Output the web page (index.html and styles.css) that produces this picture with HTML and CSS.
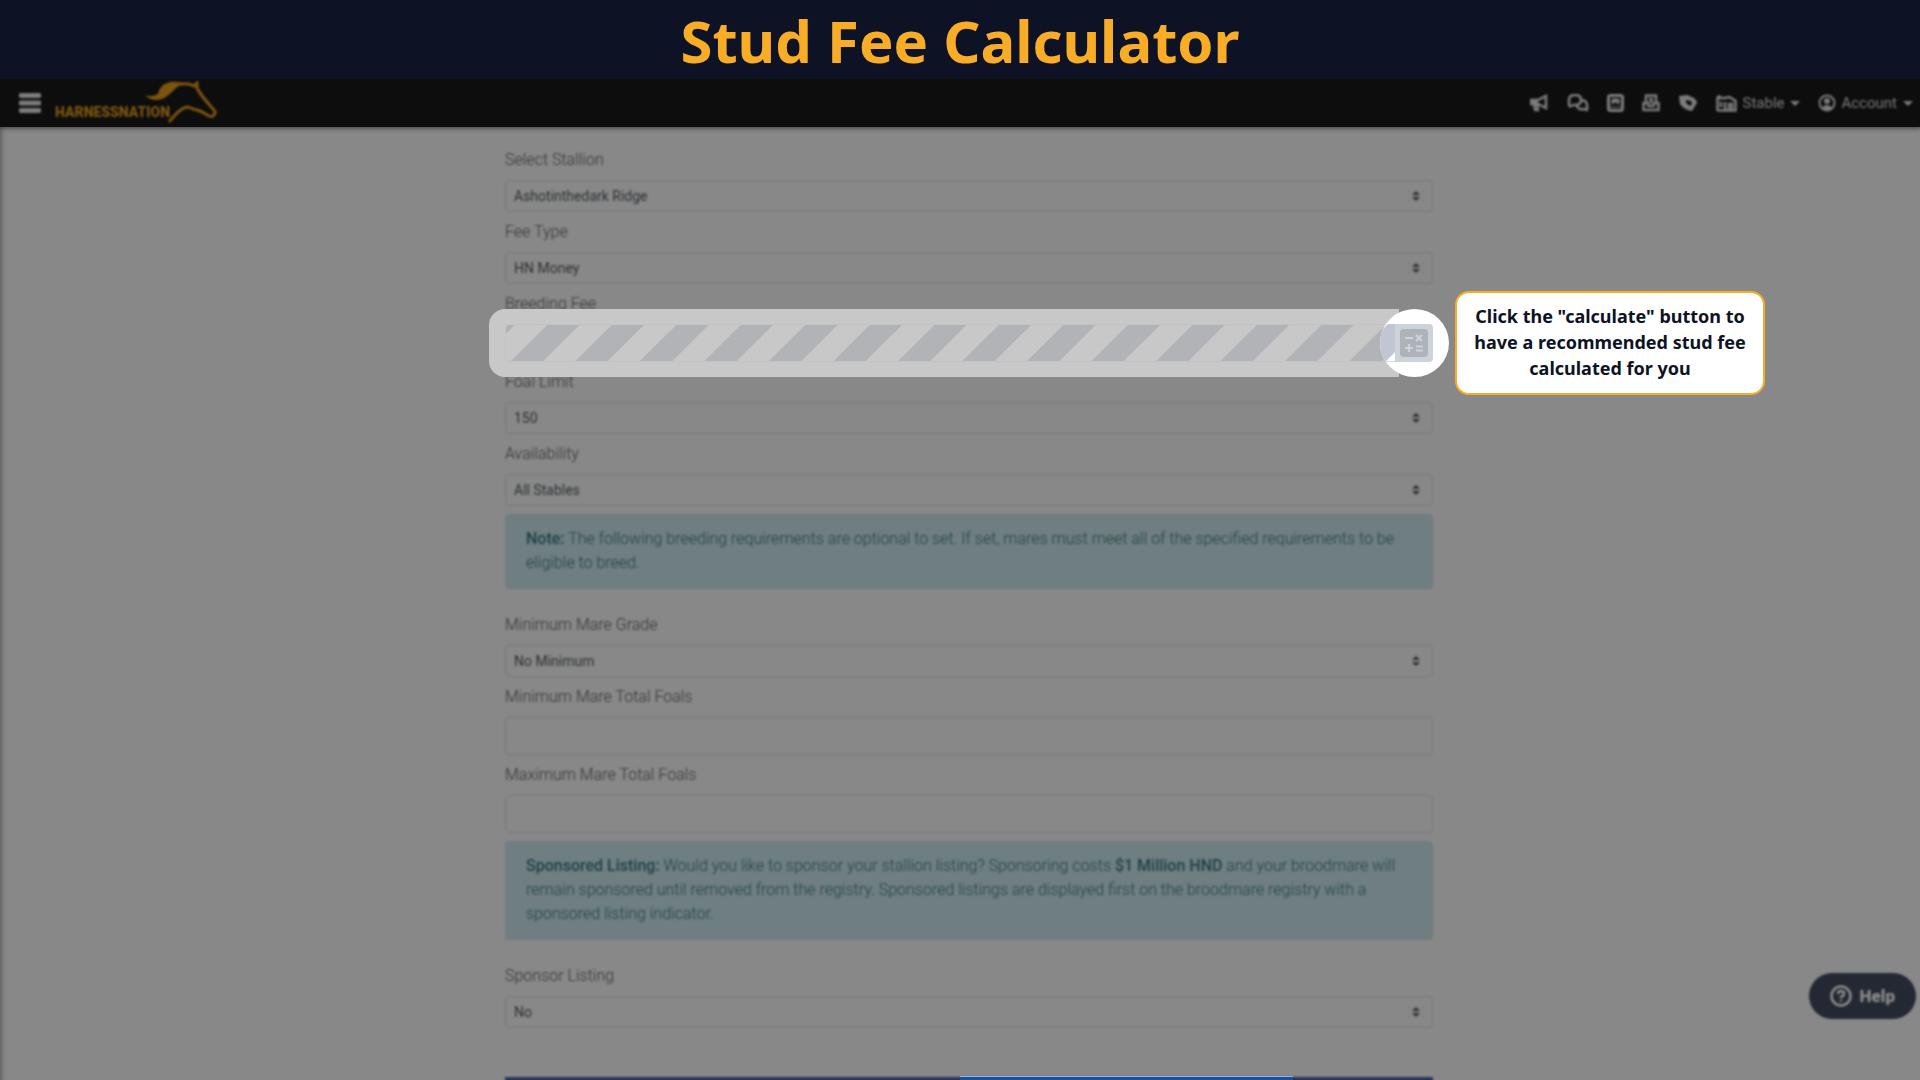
FILE: index.html
```html
<!DOCTYPE html>
<html lang="en">
<head>
<meta charset="utf-8">
<title>Stud Fee Calculator</title>
<link rel="stylesheet" href="styles.css">
</head>
<body>
<div class="shell">
  <header class="banner"><h1>Stud Fee Calculator</h1></header>

  <div class="stage">
    <nav class="navbar">
      <div class="nav-content">
        <button class="menu" type="button" aria-label="Menu">
          <svg width="22" height="21" viewBox="0 0 22 21"><path d="M2 2.5h18M2 10h18M2 17.500h18" stroke="currentColor" stroke-width="5" stroke-linecap="round"/></svg>
        </button>
        <a class="brand" href="#">
          <span>HARNESSNATION</span>
          <svg class="horse" width="74" height="44" viewBox="0 0 74 44" aria-hidden="true">
            <path d="M1 14c4 2 9 1 13-1 1-5 4-10 12-12 7-1 12 1 17 1-6 1-9 3-12 6-4 4-8 8-13 10-6 2-13 1-17-4z" fill="currentColor"/>
            <path d="M31 5c6-3 14-3 19 0l3-3v5c4 8 11 15 17 22 3 3-1 8-5 6-4-2-7-5-12-6-4 0-6-3-10-3-7 1-12 8-18 15" fill="none" stroke="currentColor" stroke-width="3"/>
          </svg>
        </a>
        <ul class="links">
          <li><a href="#" aria-label="News"><svg width="19" height="18" viewBox="0 0 19 18"><path d="M1 6h7l8-4v12l-8-4H1zM4 10l1 6h3l-1-6M16 1v14" fill="none" stroke="currentColor" stroke-width="2.500"/><path d="M2 6h6v4H2z" fill="currentColor"/></svg></a></li>
          <li><a href="#" aria-label="Messages"><svg width="22" height="18" viewBox="0 0 22 18"><path d="M2 12V6q0-5 6-5t6 5-6 5H6l-4 2M15 6q5 1 5 5v5l-3-1q-6 1-7-3" fill="none" stroke="currentColor" stroke-width="2.500" stroke-linejoin="round"/></svg></a></li>
          <li><a href="#" aria-label="Auctions"><svg width="17" height="18" viewBox="0 0 17 18"><rect x="1.500" y="1.500" width="14" height="15" rx="2" fill="none" stroke="currentColor" stroke-width="3"/><path d="M5 5h7v5l-3.500-2L5 10zM2 13h13" fill="currentColor" stroke="currentColor"/></svg></a></li>
          <li><a href="#" aria-label="Registry"><svg width="18" height="18" viewBox="0 0 18 18"><path d="M4 9V1.500h10V9M1.500 9h4l1 3h5l1-3h4v7h-15zM7 5h4M7 8h4" fill="none" stroke="currentColor" stroke-width="2.500"/></svg></a></li>
          <li><a href="#" aria-label="Sales"><svg width="20" height="18" viewBox="0 0 20 18"><path d="M1 2l8-1q10 3 10 8l-5 8q-8-1-12-7z" fill="currentColor"/><path d="M8 6l5 1 1 3-2 2-4-3z" fill="#0d0d0d"/></svg></a></li>
          <li><a href="#"><svg width="21" height="18" viewBox="0 0 21 18"><path d="M1.500 17V4h8l4-1 6 4v9.500h-18M3 4V1M9 8v8M13 16v-6h3v6M5 8v5" fill="none" stroke="currentColor" stroke-width="2.500"/></svg><span>Stable</span><i class="caret"></i></a></li>
          <li><a href="#"><svg width="18" height="18" viewBox="0 0 18 18"><circle cx="9" cy="9" r="7.500" fill="none" stroke="currentColor" stroke-width="2"/><circle cx="9" cy="7" r="3" fill="currentColor"/><path d="M3.500 14q5.500-6 11 0-5.500 4-11 0z" fill="currentColor"/></svg><span>Account</span><i class="caret"></i></a></li>
        </ul>
      </div>
    </nav>

    <main class="page">
      <form class="form">
        <div class="field soft">
          <label for="stallion">Select Stallion</label>
          <div class="pick"><select id="stallion"><option>Ashotinthedark Ridge</option></select><svg width="8" height="10" viewBox="0 0 8 10"><path d="M4 0l4 4H0zM4 10L0 6h8z"/></svg></div>
        </div>
        <div class="field soft">
          <label for="feetype">Fee Type</label>
          <div class="pick"><select id="feetype"><option>HN Money</option></select><svg width="8" height="10" viewBox="0 0 8 10"><path d="M4 0l4 4H0zM4 10L0 6h8z"/></svg></div>
        </div>
        <div class="field fee">
          <label class="soft" for="fee">Breeding Fee</label>
          <div class="spotlight">
            <input class="striped" id="fee" type="text" disabled>
            <div class="ring">
              <span class="ring-stripe"></span>
              <button class="calculate" type="button" aria-label="Calculate">
                <svg width="28" height="28" viewBox="0 0 28 28"><rect width="28" height="28" rx="4" fill="#aeb3ba"/><path d="M5 9h8M16 6l6 6M22 6l-6 6M5 19h8M9 15v8M16 17.500h7M16 21.500h7" stroke="#cdd3db" stroke-width="2.200"/></svg>
              </button>
            </div>
            <p class="tip" role="tooltip">Click the "calculate" button to have a recommended stud fee calculated for you</p>
          </div>
        </div>
        <div class="field soft">
          <label for="limit">Foal Limit</label>
          <div class="pick"><select id="limit"><option>150</option></select><svg width="8" height="10" viewBox="0 0 8 10"><path d="M4 0l4 4H0zM4 10L0 6h8z"/></svg></div>
        </div>
        <div class="field soft">
          <label for="avail">Availability</label>
          <div class="pick"><select id="avail"><option>All Stables</option></select><svg width="8" height="10" viewBox="0 0 8 10"><path d="M4 0l4 4H0zM4 10L0 6h8z"/></svg></div>
        </div>
        <p class="alert soft"><strong>Note:</strong> The following breeding requirements are optional to set. If set, mares must meet all of the specified requirements to be eligible to breed.</p>
        <div class="field soft">
          <label for="grade">Minimum Mare Grade</label>
          <div class="pick"><select id="grade"><option>No Minimum</option></select><svg width="8" height="10" viewBox="0 0 8 10"><path d="M4 0l4 4H0zM4 10L0 6h8z"/></svg></div>
        </div>
        <div class="field soft">
          <label for="minfoals">Minimum Mare Total Foals</label>
          <input id="minfoals" type="text">
        </div>
        <div class="field soft">
          <label for="maxfoals">Maximum Mare Total Foals</label>
          <input id="maxfoals" type="text">
        </div>
        <p class="alert soft"><strong>Sponsored Listing:</strong> Would you like to sponsor your stallion listing? Sponsoring costs <strong>$1 Million HND</strong> and your broodmare will remain sponsored until removed from the registry. Sponsored listings are displayed first on the broodmare registry with a sponsored listing indicator.</p>
        <div class="field soft">
          <label for="sponsor">Sponsor Listing</label>
          <div class="pick"><select id="sponsor"><option>No</option></select><svg width="8" height="10" viewBox="0 0 8 10"><path d="M4 0l4 4H0zM4 10L0 6h8z"/></svg></div>
        </div>
        <button class="submit soft" type="submit" aria-label="Submit"></button>
      </form>
    </main>
  </div>

  <button class="help" type="button">
    <svg width="22" height="22" viewBox="0 0 22 22" fill="none" stroke="currentColor" stroke-width="2.500"><circle cx="11" cy="11" r="9.500"/><path d="M8 9q0-3 3-3t3 2.500-3 3.500v1M11 14.500v2"/></svg>
    <span>Help</span>
  </button>
  <div class="progress"></div>
</div>
</body>
</html>
```
FILE: styles.css
```css
* { box-sizing: border-box; }

body {
  margin: 0;
  background: #888;
  font-family: Roboto, "Liberation Sans", sans-serif;
  font-size: 16px;
  line-height: 24px;
}

.shell {
  display: flex;
  flex-direction: column;
  height: 100vh;
  overflow: hidden;
}

.banner {
  flex: none;
  padding: 6px 0 3px;
  background: #0d1324;
  text-align: center;
  position: relative;
  z-index: 2;
}

.banner h1 {
  margin: 0;
  color: #f9ad26;
  font: 700 58px/70px "Noto Sans", "Open Sans", sans-serif;
}

.stage { flex: 1; min-height: 0; }

/* top bar */
.navbar {
  background: #0d0d0d;
  box-shadow: 0 1px 4px 1px rgba(0, 0, 0, .4);
  position: relative;
}

.nav-content {
  display: flex;
  align-items: center;
  height: 48px;
  padding: 0 7px 0 19px;
  filter: blur(1px);
}

.nav-content button,
.nav-content a { color: #7c7c7c; text-decoration: none; }

.menu {
  display: flex;
  padding: 0;
  border: 0;
  background: none;
}

.nav-content .brand {
  display: flex;
  align-items: center;
  margin-left: 14px;
  color: #7d540f;
  font: 900 14px/20px Roboto, "Open Sans", sans-serif;
}

.brand span { padding-top: 18px; }
.horse { margin-left: -26px; }

.links {
  display: flex;
  align-items: center;
  gap: 18px;
  margin: 0 0 0 auto;
  padding: 0;
  list-style: none;
  font-size: 15px;
}

.links a { display: flex; align-items: center; gap: 5px; }

.caret {
  margin-left: 1px;
  border: 5px solid transparent;
  border-top-color: currentColor;
  border-bottom: 0;
}

/* form */
.page {
  height: 100%;
  padding: 21px 0 0 18px;
  box-shadow: inset 4px 0 5px -3px rgba(0, 0, 0, .4);
}

.form { max-width: 928px; margin: 0 auto; }
.soft { filter: blur(1px); }
.field { margin-bottom: 8px; }

.field label {
  display: block;
  width: max-content;
  margin-bottom: 8px;
  color: #303235;
  font-weight: 300;
}

.field input,
.field select {
  display: block;
  width: 100%;
  height: 38px;
  margin: 0;
  padding: 0 8px;
  border: 1px solid #75787b;
  border-radius: 4px;
  background: transparent;
  color: #2c3034;
  font: 400 14px/20px Roboto, "Liberation Sans", sans-serif;
  appearance: none;
  opacity: 1;
}

.field select { height: 32px; }
.pick { display: grid; align-items: center; }
.pick > * { grid-area: 1 / 1; }
.pick svg { justify-self: end; margin-right: 13px; fill: #2c3034; }

.alert {
  margin: 0 0 24px;
  padding: 13px 21px 14px;
  border-radius: 4px;
  background: #6f7e80;
  color: #1c4147;
  font-weight: 300;
}

.alert strong { font-weight: 500; }

.submit {
  display: block;
  width: 100%;
  height: 38px;
  margin-top: 49px;
  border: 0;
  background: #26345f;
}

/* highlighted fee row */
.spotlight { position: relative; z-index: 1; padding-right: 38px; }

.spotlight::before {
  content: "";
  position: absolute;
  inset: -15px 34px -15px -16px;
  border-radius: 16px 0 0 16px;
  background: #c8c8c8;
}

.field .striped {
  position: relative;
  border: 1px solid #c2c3c4;
  border-right: 0;
  border-radius: 4px 0 0 4px;
  background: linear-gradient(to bottom right, #b1b3b7 8%, #c8c8c8 9%, #c8c8c8 33%, #b1b3b7 34%, #b1b3b7 58%, #c8c8c8 59%, #c8c8c8 83%, #b1b3b7 84%) 0 0 / 7.25% 64px border-box;
}

.ring {
  position: absolute;
  top: -15px;
  right: -16px;
  display: flex;
  align-items: center;
  width: 69px;
  height: 68px;
  border-radius: 50%;
  background: #fff;
  overflow: hidden;
}

.ring-stripe {
  width: 15px;
  height: 38px;
  background: linear-gradient(135deg, #fff 5px, #c1c6d2 6px, #c1c6d2 30px, #fff 31px);
  border-bottom: 1px solid #d5d9df;
}

.calculate {
  display: flex;
  align-items: center;
  justify-content: center;
  width: 38px;
  height: 38px;
  padding: 0;
  border: 0;
  border-radius: 0 4px 4px 0;
  background: #cdd3db;
}

.tip {
  position: absolute;
  top: -33px;
  left: calc(100% + 22px);
  width: 310px;
  margin: 0;
  padding: 10px 12px 12px;
  border: 2px solid #f9ad26;
  border-radius: 14px;
  background: #fff;
  color: #0d1324;
  font: 700 18px/26px "Noto Sans", "Open Sans", sans-serif;
  text-align: center;
}

/* floating controls */
.help {
  position: fixed;
  right: 4px;
  bottom: 61px;
  display: flex;
  align-items: center;
  gap: 8px;
  height: 46px;
  padding: 0 21px;
  border: 0;
  border-radius: 23px;
  background: #242833;
  color: #8c8c8c;
  font: 900 17px/24px Roboto, "Liberation Sans", sans-serif;
  filter: blur(1px);
}

.progress {
  position: fixed;
  left: 50%;
  bottom: 0;
  width: 333px;
  height: 4px;
  border-top: 1px solid #a9b4c6;
  background: #1450a4;
}
```
